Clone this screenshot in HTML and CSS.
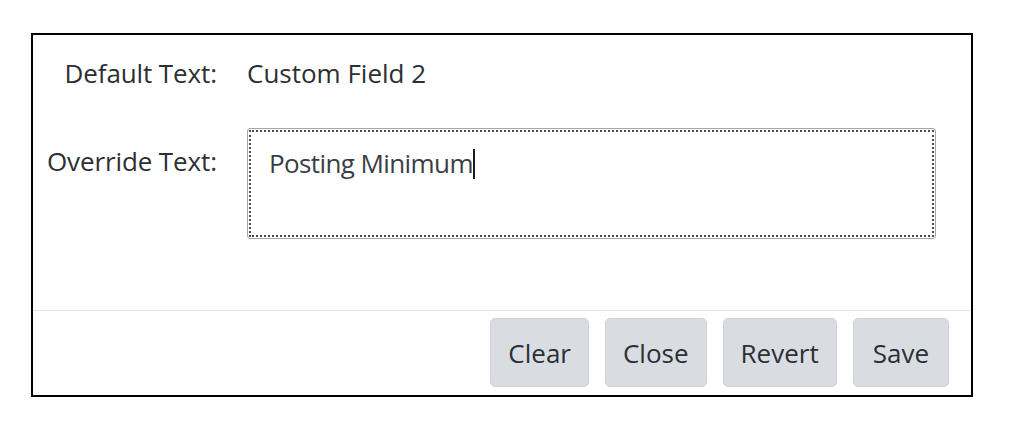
FILE: index.html
```html
<!DOCTYPE html>
<html lang="en">
<head>
<meta charset="utf-8">
<title>Override Text</title>
<link rel="stylesheet" href="styles.css">
</head>
<body>
<div class="dialog">
  <div class="content">
    <div class="form">
      <div class="label">Default Text:</div>
      <div class="value">Custom Field 2</div>
      <div class="label label-override">Override Text:</div>
      <div class="textbox"><span class="typed">Posting Minimum</span><span class="caret"></span></div>
    </div>
  </div>
  <div class="footer">
    <button class="btn">Clear</button>
    <button class="btn">Close</button>
    <button class="btn">Revert</button>
    <button class="btn btn-save">Save</button>
  </div>
</div>
</body>
</html>
```
FILE: styles.css
```css
html, body {
  margin: 0;
  padding: 0;
  background: #ffffff;
}

body {
  font-family: "Open Sans", "Noto Sans", sans-serif;
  font-weight: 500;
  color: #2c2f33;
}

.dialog {
  margin: 33px 0 0 31px;
  width: 942px;
  height: 364px;
  box-sizing: border-box;
  border: 2px solid #000000;
  display: flex;
  flex-direction: column;
  background: #ffffff;
}

.content {
  flex: 1;
  padding: 20px 0 0 0;
}

.form {
  display: grid;
  grid-template-columns: 184px 689px;
  column-gap: 30px;
  row-gap: 37px;
  align-items: start;
}

.label {
  font-size: 26px;
  line-height: 36px;
  text-align: right;
  letter-spacing: -0.1px;
}

.label-override {
  padding-top: 15px;
}

.value {
  font-size: 26px;
  line-height: 36px;
}

.textbox {
  height: 111px;
  box-sizing: border-box;
  border: 1px solid #a6a6a6;
  border-radius: 3px;
  outline: 2px dotted #4a4a4a;
  outline-offset: -4px;
  padding: 16px 21px 0;
  font-size: 26px;
  line-height: 36px;
  letter-spacing: -0.6px;
  color: #3a3e44;
  display: flex;
  align-items: flex-start;
}

.caret {
  display: inline-block;
  width: 2px;
  height: 30px;
  margin-top: 4px;
  background: #1a1a1a;
}

.footer {
  border-top: 1px solid #e3e3e3;
  padding: 7px 22px 8px 0;
  display: flex;
  justify-content: flex-end;
  gap: 16px;
}

.btn {
  font-family: "Open Sans", "Noto Sans", sans-serif;
  font-weight: 500;
  font-size: 26px;
  color: #2c2f33;
  background: #d9dde2;
  border: 1px solid #cfd4da;
  border-radius: 5px;
  height: 69px;
  padding: 0 17px;
  margin: 0;
}

.btn-save {
  padding: 0 19px;
}
```
